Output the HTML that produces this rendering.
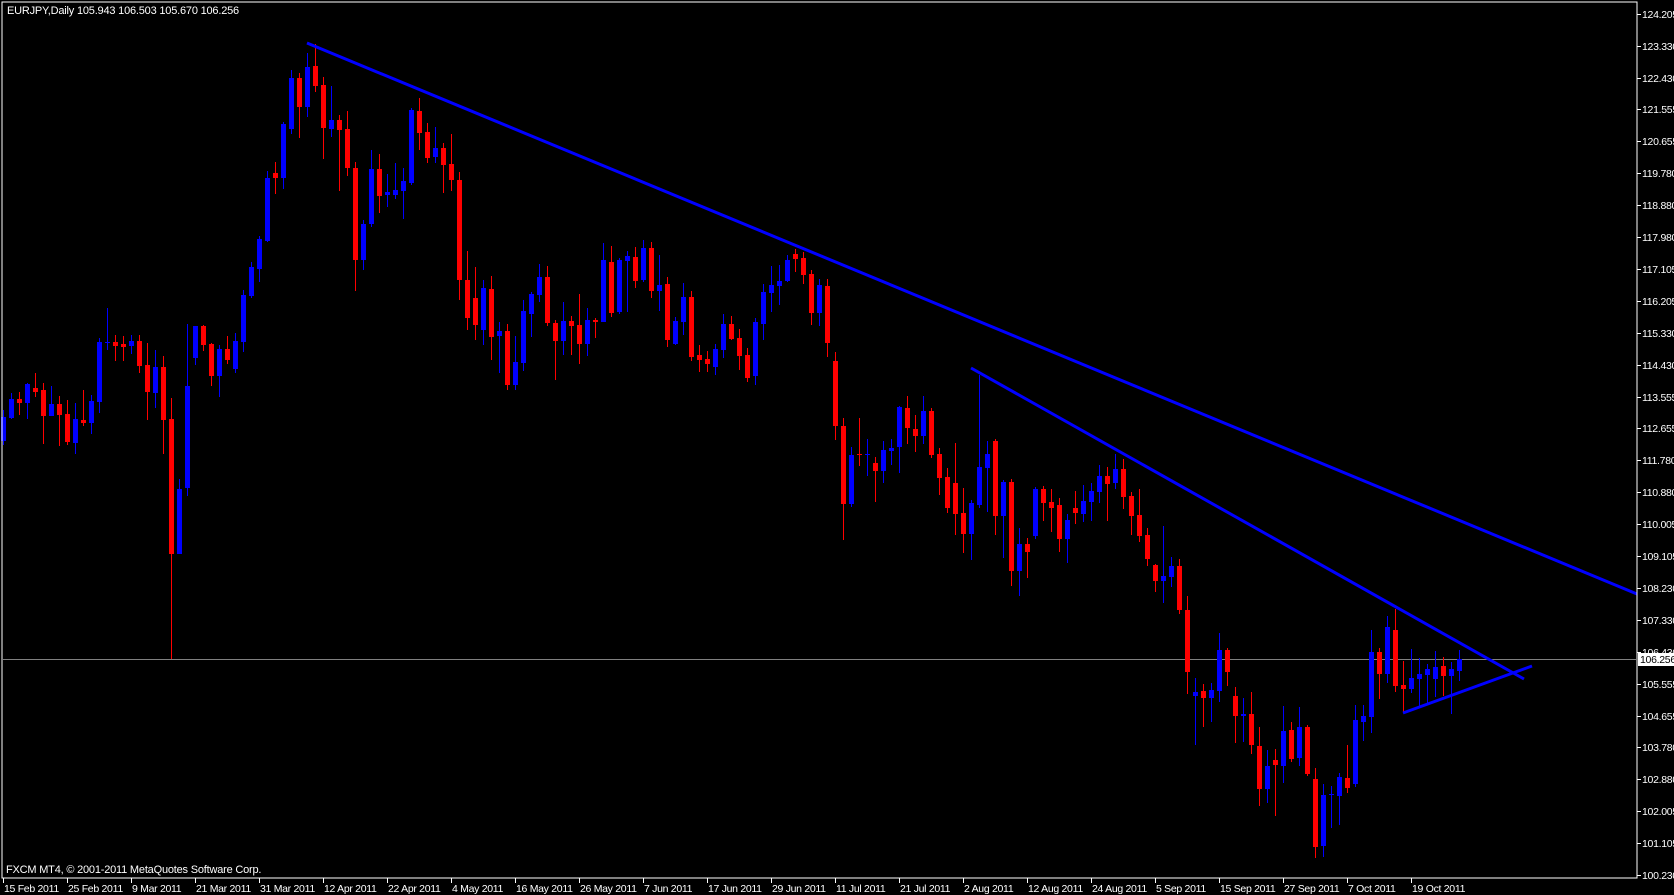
<!DOCTYPE html>
<html><head><meta charset="utf-8">
<style>
html,body{margin:0;padding:0;background:#000;width:1674px;height:895px;overflow:hidden}
svg{display:block}
text{font-family:"Liberation Sans","DejaVu Sans",sans-serif;font-size:11px;fill:#fff}
.ax{font-size:10.5px;letter-spacing:-0.3px}
</style></head>
<body>
<svg id="c" width="1674" height="895" xmlns="http://www.w3.org/2000/svg">
<rect x="0" y="0" width="1674" height="895" fill="#000"/>
<line x1="3" y1="659.5" x2="1636" y2="659.5" stroke="#808080" stroke-width="1"/>
<g id="candles"></g>
<g stroke="#0000ff" stroke-width="3" stroke-linecap="butt">
<line x1="307" y1="43" x2="1637" y2="594"/>
<line x1="971" y1="368" x2="1524" y2="679"/>
<line x1="1403" y1="713" x2="1532" y2="666"/>
</g>
<rect x="2" y="2" width="1635" height="876" fill="none" stroke="#fff" stroke-width="1"/>
<g id="axis"></g>
<text x="7" y="14" style="letter-spacing:-0.2px">EURJPY,Daily  105.943 106.503 105.670 106.256</text>
<text x="6" y="873" style="letter-spacing:-0.2px">FXCM MT4, © 2001-2011 MetaQuotes Software Corp.</text>
</svg>
<script>
var d=[
[1,417,441,410,445],[1,399,418,393,419],[0,399,403,392,415],[1,384,403,383,419],[0,388,392,373,397],
[0,390,416,383,444],[1,404,416,386,416],[0,404,415,396,446],[0,414,442,400,445],[1,419,443,403,454],
[0,420,423,390,426],[1,401,423,395,434],[1,342,402,338,413],[1,342,343,308,350],[0,342,346,335,361],
[0,344,347,336,361],[1,341,346,335,354],[0,341,366,335,373],[0,365,392,343,420],[1,367,393,350,408],
[0,367,420,356,454],[0,419,554,398,659],[1,489,554,479,554],[1,386,488,324,496],[1,326,358,326,365],
[0,326,345,325,351],[0,344,376,343,386],[1,349,376,345,397],[0,349,360,336,364],[1,341,369,333,373],
[1,295,342,290,352],[1,267,296,262,298],[1,239,269,236,282],[1,178,241,171,242],[0,173,178,162,194],
[1,124,178,122,189],[1,78,129,70,134],[0,78,107,73,138],[1,67,107,53,117],[0,66,86,44,92],
[0,85,128,77,159],[1,120,129,86,137],[0,120,130,115,191],[0,129,168,111,176],[0,168,260,162,291],
[1,224,260,220,270],[1,169,224,150,227],[0,169,196,154,213],[1,192,195,174,207],[1,190,195,163,199],
[1,181,191,168,219],[1,110,183,108,185],[0,111,133,98,150],[0,132,158,123,163],[1,148,157,127,163],
[0,148,165,143,193],[0,164,180,134,191],[0,180,280,172,300],[0,280,318,251,330],[0,298,325,267,340],
[1,288,330,280,345],[0,289,337,276,360],[1,331,336,322,373],[0,331,385,324,390],[1,362,385,336,390],
[1,311,363,300,371],[1,294,314,292,337],[1,277,295,264,302],[0,277,323,266,326],[0,323,341,320,380],
[1,321,341,302,355],[0,321,326,316,355],[0,325,344,294,364],[1,320,344,308,356],[0,320,322,318,338],
[1,260,322,243,322],[0,262,313,246,317],[1,260,312,258,314],[1,256,261,251,312],[0,257,281,247,288],
[1,248,280,240,282],[0,248,291,242,298],[1,285,291,255,311],[0,284,340,277,347],[1,321,344,317,345],
[1,297,322,283,335],[0,297,357,291,361],[0,355,360,345,372],[0,359,364,351,372],[1,349,367,344,375],
[1,324,350,314,358],[0,324,339,316,340],[0,338,356,329,370],[0,355,378,348,382],[1,322,376,318,385],
[1,292,324,284,340],[1,285,293,266,312],[1,281,286,265,305],[1,260,281,255,282],[0,254,259,249,272],
[0,258,275,252,284],[0,274,313,270,325],[1,285,313,279,326],[0,286,343,279,357],[0,361,426,352,440],
[0,426,504,418,540],[1,455,504,447,507],[0,454,455,418,466],[1,454,455,439,476],[0,463,471,457,502],
[1,450,471,441,483],[1,448,451,439,465],[1,407,447,406,473],[0,408,428,396,444],[0,429,436,415,452],
[1,411,436,396,444],[0,411,455,408,458],[0,454,478,448,495],[0,477,508,468,513],[0,483,514,443,535],
[0,513,534,488,553],[1,503,534,500,560],[1,467,505,375,508],[1,454,468,441,512],[0,441,516,439,535],
[1,482,516,480,558],[0,482,571,479,586],[1,544,571,528,596],[0,544,552,538,578],[1,489,536,487,539],
[0,489,503,486,521],[0,502,508,489,532],[0,505,539,498,552],[1,520,539,514,563],[0,508,513,491,524],
[1,501,514,485,522],[1,491,502,483,521],[1,476,492,465,503],[0,476,484,467,521],[1,469,483,454,489],
[0,469,497,459,509],[0,496,516,492,535],[0,515,536,489,542],[0,535,559,528,566],[0,565,581,564,592],
[1,576,581,526,603],[1,566,577,557,587],[0,566,610,559,614],[0,610,672,596,694],[1,692,696,678,745],
[0,691,698,684,727],[1,690,698,683,722],[1,650,691,633,702],[0,650,672,648,686],[0,696,716,687,743],
[1,714,716,698,742],[0,714,745,692,754],[0,746,789,727,806],[1,766,789,750,803],[0,760,765,749,816],
[1,731,766,706,783],[0,730,759,722,762],[1,727,758,707,766],[0,727,774,725,776],[0,779,847,768,858],
[1,795,846,784,857],[1,794,795,786,828],[1,777,796,773,825],[0,778,788,745,793],[1,720,784,705,787],
[1,716,722,705,741],[1,652,717,630,733],[0,652,674,648,699],[1,627,674,616,683],[0,630,686,609,692],
[0,685,689,661,713],[1,678,689,649,693],[1,674,679,658,706],[1,669,675,664,703],[1,667,679,651,697],
[0,666,676,657,696],[1,669,676,662,714],[1,659,671,650,681]
];
var g=document.getElementById("candles"),s="";
for(var i=0;i<d.length;i++){var c=d[i],x=1+8*i,col=c[0]?"#0000ff":"#ff0000";
s+='<rect x="'+(x+2)+'" y="'+c[3]+'" width="1" height="'+Math.max(1,c[4]-c[3])+'" fill="'+col+'"/>';
s+='<rect x="'+x+'" y="'+c[1]+'" width="5" height="'+Math.max(1,c[2]-c[1])+'" fill="'+col+'"/>';}
g.innerHTML=s;
var labels=["124.205","123.330","122.430","121.555","120.655","119.780","118.880","117.980","117.105","116.205","115.330","114.430","113.555","112.655","111.780","110.880","110.005","109.105","108.230","107.330","106.430","105.555","104.655","103.780","102.880","102.005","101.105","100.230"];
var a="";
for(var k=0;k<labels.length;k++){var y=Math.round(875-(27-k)*31.9);
a+='<line x1="1637" y1="'+(y+0.5)+'" x2="1641" y2="'+(y+0.5)+'" stroke="#fff"/>';
a+='<text class="ax" x="1642" y="'+(y+4)+'">'+labels[k]+'</text>';}
a+='<rect x="1638" y="653" width="36" height="13" fill="#fff"/><text class="ax" x="1640" y="663" style="fill:#000">106.256</text>';
var dates=["15 Feb 2011","25 Feb 2011","9 Mar 2011","21 Mar 2011","31 Mar 2011","12 Apr 2011","22 Apr 2011","4 May 2011","16 May 2011","26 May 2011","7 Jun 2011","17 Jun 2011","29 Jun 2011","11 Jul 2011","21 Jul 2011","2 Aug 2011","12 Aug 2011","24 Aug 2011","5 Sep 2011","15 Sep 2011","27 Sep 2011","7 Oct 2011","19 Oct 2011"];
for(var j=0;j<dates.length;j++){var x=3+64*j;
a+='<line x1="'+(x+0.5)+'" y1="878" x2="'+(x+0.5)+'" y2="883" stroke="#fff"/>';
a+='<text class="ax" x="'+(x+1)+'" y="892">'+dates[j]+'</text>';}
document.getElementById("axis").innerHTML=a;
</script>
</body></html>
